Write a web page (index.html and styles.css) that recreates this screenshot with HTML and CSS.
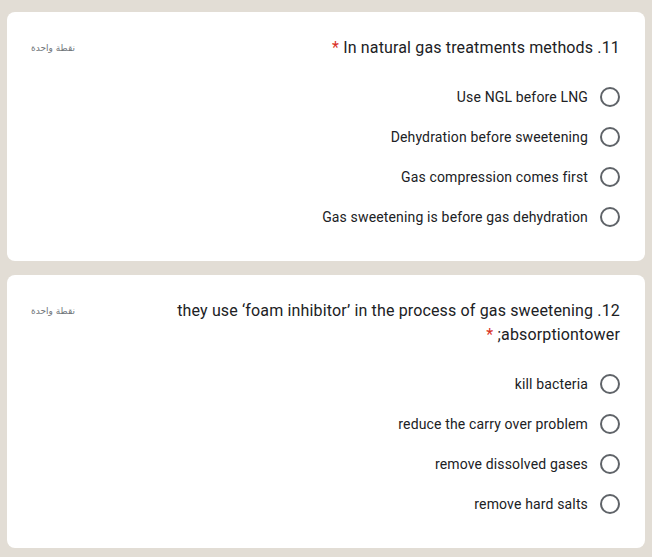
FILE: index.html
```html
<!DOCTYPE html>
<html lang="ar" dir="rtl">
<head>
<meta charset="utf-8">
<title>Form</title>
<link rel="stylesheet" href="styles.css">
</head>
<body>
<main class="page">
  <section class="card">
    <div class="card-head">
      <div class="title">11. In natural gas treatments methods <span class="req">*</span></div>
      <span class="points">نقطة واحدة</span>
    </div>
    <div class="options">
      <label class="option"><span class="radio"></span><span class="opt-text">Use NGL before LNG</span></label>
      <label class="option"><span class="radio"></span><span class="opt-text">Dehydration before sweetening</span></label>
      <label class="option"><span class="radio"></span><span class="opt-text">Gas compression comes first</span></label>
      <label class="option"><span class="radio"></span><span class="opt-text">Gas sweetening is before gas dehydration</span></label>
    </div>
  </section>
  <section class="card">
    <div class="card-head">
      <div class="title title-wrap">12. they use ‘foam inhibitor’ in the process of gas sweetening absorptiontower; <span class="req">*</span></div>
      <span class="points">نقطة واحدة</span>
    </div>
    <div class="options">
      <label class="option"><span class="radio"></span><span class="opt-text">kill bacteria</span></label>
      <label class="option"><span class="radio"></span><span class="opt-text">reduce the carry over problem</span></label>
      <label class="option"><span class="radio"></span><span class="opt-text">remove dissolved gases</span></label>
      <label class="option"><span class="radio"></span><span class="opt-text">remove hard salts</span></label>
    </div>
  </section>
</main>
</body>
</html>
```
FILE: styles.css
```css
html, body {
  margin: 0;
  padding: 0;
}
body {
  background: #e2ddd5;
  font-family: Roboto, "DejaVu Sans", sans-serif;
  color: #202124;
}
.page {
  display: flex;
  flex-direction: column;
  gap: 14px;
  padding: 12px 7px 10px 7px;
}
.card {
  background: #ffffff;
  border-radius: 8px;
  padding: 24px 25px 24px 24px;
}
.card-head {
  display: flex;
  justify-content: space-between;
  align-items: flex-start;
  gap: 20px;
}
.title {
  font-size: 16px;
  line-height: 24px;
  letter-spacing: 0.15px;
  color: #202124;
}
.title-wrap {
  max-width: 480px;
}
.req {
  color: #d93025;
}
.points {
  font-size: 9px;
  line-height: 24px;
  color: #70757a;
  font-family: "DejaVu Sans", sans-serif;
  white-space: nowrap;
}
.options {
  display: flex;
  flex-direction: column;
  margin-top: 17px;
}
.option {
  display: flex;
  align-items: center;
  gap: 12px;
  height: 40px;
}
.radio {
  box-sizing: border-box;
  width: 20px;
  height: 20px;
  border: 2px solid #5f6368;
  border-radius: 50%;
  flex: none;
}
.opt-text {
  font-size: 14px;
  line-height: 20px;
  letter-spacing: 0.15px;
  color: #202124;
}
```
